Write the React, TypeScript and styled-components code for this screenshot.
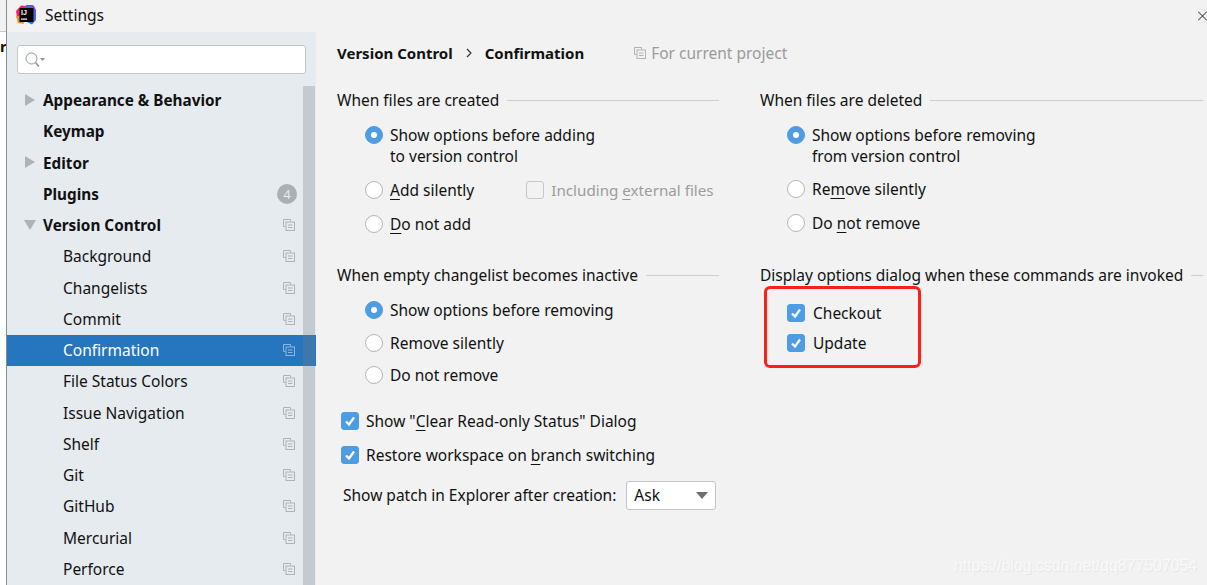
import React from 'react';
import styled, { createGlobalStyle } from 'styled-components';

const FONT = '"Noto Sans", "Open Sans", sans-serif';

const GlobalStyle = createGlobalStyle`
  html, body { margin: 0; padding: 0; background: #f2f2f2; }
  * { box-sizing: border-box; }
`;

const Page = styled.div`
  display: flex;
  position: relative;
  width: 1207px;
  height: 585px;
  overflow: hidden;
  font-family: ${FONT};
  font-size: 15.5px;
  color: #111;
  background: #f2f2f2;
`;

const BehindWindow = styled.div`
  flex: 0 0 7px;
  height: 100%;
  background: #fff;
  border-right: 1px solid #8a8a8a;
  overflow: hidden;
`;

const BehindRule = styled.div`
  height: 32px;
  background: #f2f2f2;
  border-bottom: 1px solid #c8c8c8;
`;

const BehindLetter = styled.div`
  margin: 4px 0 0 0;
  font-weight: 700;
  font-size: 15px;
  line-height: 20px;
  width: 6px;
  overflow: hidden;
`;

const Window = styled.div`
  flex: 1;
  display: flex;
  flex-direction: column;
  min-width: 0;
`;

const TitleBar = styled.div`
  flex: 0 0 32px;
  display: flex;
  align-items: center;
  padding: 0 0 3px 9px;
  gap: 9px;
  position: relative;
`;

const CloseButton = styled.svg`
  position: absolute;
  right: 0;
  top: 10px;
  width: 9px;
  height: 12px;
`;

const Body = styled.div`
  flex: 1;
  display: flex;
  min-height: 0;
`;

const Sidebar = styled.div`
  flex: 0 0 309px;
  position: relative;
  background: #e6ebf0;
  padding-top: 13px;
  overflow: hidden;
`;

const SearchBox = styled.div`
  display: flex;
  align-items: center;
  width: 289px;
  height: 29px;
  margin: 0 0 10.5px 10px;
  padding-left: 7px;
  background: #fff;
  border: 1px solid #c4c7ca;
  border-radius: 3px;
`;

const Scrollbar = styled.div`
  position: absolute;
  top: 54px;
  bottom: 0;
  right: 1px;
  width: 12px;
  background: rgba(120, 125, 130, 0.3);
`;

const TreeRow = styled.div<{ $selected?: boolean; $level?: number; $bold?: boolean }>`
  display: flex;
  align-items: center;
  height: 31.25px;
  padding-left: ${p => (p.$level ? 56 : 36)}px;
  padding-right: 21px;
  position: relative;
  font-size: ${p => (p.$bold ? 15.3 : 15.5)}px;
  font-weight: ${p => (p.$bold ? 700 : 400)};
  color: ${p => (p.$selected ? '#fff' : '#111')};
  background: ${p => (p.$selected ? '#2675bf' : 'transparent')};
`;

const TreeLabel = styled.span`
  flex: 1;
`;

const Arrow = styled.svg`
  position: absolute;
  left: 17px;
  top: 9px;
  width: 12px;
  height: 12px;
  fill: #b0b3b6;
`;

const Badge = styled.span`
  display: flex;
  align-items: center;
  justify-content: center;
  width: 20px;
  height: 20px;
  margin-right: -2px;
  border-radius: 50%;
  background: #a9b0b6;
  color: #e6ebf0;
  font-size: 13px;
  font-weight: 400;
`;

const ProjectIcon = styled.svg<{ $tone?: string }>`
  flex: none;
  width: 12px;
  height: 12px;
  fill: none;
  stroke: ${p => p.$tone || '#afb3b7'};
`;

const Content = styled.div`
  flex: 1;
  min-width: 0;
  padding: 10px 4px 0 21px;
`;

const Breadcrumb = styled.div`
  display: flex;
  align-items: center;
  height: 22px;
  font-size: 15px;
  font-weight: 700;
  margin-bottom: 25px;
`;

const Chevron = styled.svg`
  width: 8px;
  height: 10px;
  margin: 0 12px;
  fill: none;
  stroke: #333;
  stroke-width: 1.2;
`;

const ProjectNote = styled.span`
  display: flex;
  align-items: center;
  gap: 5px;
  margin-left: 50px;
  font-size: 15.5px;
  font-weight: 400;
  color: #9b9b9b;
`;

const Columns = styled.div`
  display: grid;
  grid-template-columns: 382px 443px;
  column-gap: 41px;
`;

const Column = styled.div`
  display: flex;
  flex-direction: column;
`;

const GroupTitle = styled.div<{ $top?: number }>`
  display: flex;
  align-items: center;
  gap: 8px;
  height: 22px;
  margin-top: ${p => p.$top || 0}px;
  white-space: nowrap;
  &::after {
    content: '';
    flex: 1;
    height: 1px;
    background: #cfcfcf;
  }
`;

const OptionRow = styled.div<{ $top: number; $indent?: number }>`
  display: flex;
  align-items: center;
  gap: 7px;
  height: 22px;
  white-space: nowrap;
  margin-top: ${p => p.$top}px;
  margin-left: ${p => p.$indent ?? 28}px;
`;

const OptionText = styled.div<{ $indent: number }>`
  margin-left: ${p => p.$indent}px;
  height: 21px;
  line-height: 21px;
`;

const Radio = styled.span<{ $on?: boolean }>`
  flex: none;
  position: relative;
  width: 18px;
  height: 18px;
  border-radius: 50%;
  background: ${p => (p.$on ? '#4e9de4' : '#fff')};
  border: 1px solid ${p => (p.$on ? '#4e9de4' : '#b5b5b5')};
  &::after {
    content: '';
    display: ${p => (p.$on ? 'block' : 'none')};
    position: absolute;
    left: 5px;
    top: 5px;
    width: 6px;
    height: 6px;
    border-radius: 50%;
    background: #fff;
  }
`;

const CheckBox = styled.span<{ $disabled?: boolean }>`
  flex: none;
  display: flex;
  align-items: center;
  justify-content: center;
  width: 18px;
  height: 18px;
  border-radius: 3px;
  background: ${p => (p.$disabled ? '#f2f2f2' : '#4e9de4')};
  border: 1px solid ${p => (p.$disabled ? '#c8c8c8' : '#4e9de4')};
`;

const Tick = styled.svg`
  width: 12px;
  height: 12px;
  fill: none;
  stroke: #fff;
  stroke-width: 2.2;
`;

const Disabled = styled.span`
  display: flex;
  align-items: center;
  gap: 7px;
  margin-left: 45px;
  font-size: 15.2px;
  color: #9c9c9c;
`;

const Key = styled.u`
  text-underline-offset: 3px;
  text-decoration-thickness: 1px;
`;

const ComboRow = styled.div`
  display: flex;
  align-items: center;
  height: 30px;
  margin: 14px 0 0 6px;
  gap: 10px;
`;

const Combo = styled.div`
  display: flex;
  align-items: center;
  justify-content: space-between;
  width: 90px;
  height: 29px;
  padding: 0 7px;
  background: #fff;
  border: 1px solid #c4c4c4;
  border-radius: 3px;
  &::after {
    content: '';
    border-left: 6px solid transparent;
    border-right: 6px solid transparent;
    border-top: 7px solid #6e6e6e;
  }
`;

const Highlight = styled.div`
  width: 157px;
  height: 82px;
  margin: 0 0 0 4px;
  padding: 13px 0 0 20px;
  border: 3px solid #fb1f17;
  border-radius: 6px;
  display: flex;
  flex-direction: column;
  gap: 8px;
`;

const HighlightRow = styled.div`
  display: flex;
  align-items: center;
  gap: 8px;
  height: 22px;
`;

const Watermark = styled.div`
  position: absolute;
  left: 954px;
  top: 556px;
  font-family: "Liberation Sans", Arial, sans-serif;
  font-size: 15.85px;
  line-height: 20px;
  color: #f9f9f9;
  text-shadow: 1px 1px 1px #e4e4e4;
`;

const Logo = () => (
  <svg width="20" height="20" viewBox="0 0 20 20" style={{ flex: 'none' }}>
    <path d="M0 6 L5 0.5 L11 1 L8 14 L1 13 Z" fill="#ef2a63" />
    <path d="M10 0 L17 0 L20 5 L20 15 L16 19.5 L9 16 Z" fill="#3a6ee8" />
    <path d="M13 0 L18 1 L20 6 L15 7 Z" fill="#8248e0" />
    <path d="M0 11 L6 11 L8 19 L2 18 Z" fill="#f78b2e" />
    <rect x="3.5" y="3" width="14" height="14" fill="#000" />
    <text x="5" y="10" fontFamily='"Liberation Sans", sans-serif' fontSize="7" fontWeight="700" fill="#fff">
      IJ
    </text>
    <rect x="5" y="13.5" width="6" height="1.2" fill="#fff" />
  </svg>
);

const SearchIcon = () => (
  <svg width="20" height="16" viewBox="0 0 20 16" fill="none">
    <circle cx="6.5" cy="6.5" r="5.5" stroke="#8f9396" strokeWidth="1" />
    <path d="M10.5 10.5 L14 14.5" stroke="#8f9396" strokeWidth="1.6" />
    <path d="M15 6 H20 L17.5 9 Z" fill="#8f9396" />
  </svg>
);

const CopyIcon = ({ tone }: { tone?: string }) => (
  <ProjectIcon $tone={tone} viewBox="0 0 12 12">
    <path d="M7.5 2.5 V0.5 H0.5 V7.5 H2.5" />
    <rect x="3" y="3" width="8.5" height="8.5" />
    <path d="M5 6 H9.5 M5 8.5 H9.5" />
  </ProjectIcon>
);

const Check = () => (
  <CheckBox>
    <Tick viewBox="0 0 12 12">
      <path d="M2 6.5 L5 9.5 L10 2.5" />
    </Tick>
  </CheckBox>
);

const tree = [
  { label: 'Appearance & Behavior', bold: true, arrow: 'right' },
  { label: 'Keymap', bold: true },
  { label: 'Editor', bold: true, arrow: 'right' },
  { label: 'Plugins', bold: true, badge: '4' },
  { label: 'Version Control', bold: true, arrow: 'down', icon: true },
  { label: 'Background', level: 1, icon: true },
  { label: 'Changelists', level: 1, icon: true },
  { label: 'Commit', level: 1, icon: true },
  { label: 'Confirmation', level: 1, icon: true, selected: true },
  { label: 'File Status Colors', level: 1, icon: true },
  { label: 'Issue Navigation', level: 1, icon: true },
  { label: 'Shelf', level: 1, icon: true },
  { label: 'Git', level: 1, icon: true },
  { label: 'GitHub', level: 1, icon: true },
  { label: 'Mercurial', level: 1, icon: true },
  { label: 'Perforce', level: 1, icon: true },
];

const App: React.FC = () => {
  return (
    <Page>
      <GlobalStyle />
      <BehindWindow>
        <BehindRule />
        <BehindLetter>r</BehindLetter>
      </BehindWindow>
      <Window>
        <TitleBar>
          <Logo />
          Settings
          <CloseButton viewBox="0 0 9 12">
            <path d="M0 1.5 L9 10.5 M9 1.5 L0 10.5" stroke="#222" strokeWidth="1" />
          </CloseButton>
        </TitleBar>
        <Body>
          <Sidebar>
            <SearchBox>
              <SearchIcon />
            </SearchBox>
            {tree.map(item => (
              <TreeRow key={item.label} $bold={item.bold} $level={item.level} $selected={item.selected}>
                {item.arrow && (
                  <Arrow viewBox="0 0 12 12">
                    {item.arrow === 'right' ? <path d="M1 0 L11 6 L1 12 Z" /> : <path d="M0 1 H12 L6 11 Z" />}
                  </Arrow>
                )}
                <TreeLabel>{item.label}</TreeLabel>
                {item.badge && <Badge>{item.badge}</Badge>}
                {item.icon && <CopyIcon tone={item.selected ? '#8fb6dc' : undefined} />}
              </TreeRow>
            ))}
            <Scrollbar />
          </Sidebar>
          <Content>
            <Breadcrumb>
              Version Control
              <Chevron viewBox="0 0 8 10">
                <path d="M2 1 L6 5 L2 9" />
              </Chevron>
              Confirmation
              <ProjectNote>
                <CopyIcon />
                For current project
              </ProjectNote>
            </Breadcrumb>
            <Columns>
              <Column>
                <GroupTitle>When files are created</GroupTitle>
                <OptionRow $top={13}>
                  <Radio $on />
                  Show options before adding
                </OptionRow>
                <OptionText $indent={53}>to version control</OptionText>
                <OptionRow $top={12}>
                  <Radio />
                  <span>
                    <Key>A</Key>dd silently
                  </span>
                  <Disabled>
                    <CheckBox $disabled />
                    <span>
                      Including <Key>e</Key>xternal files
                    </span>
                  </Disabled>
                </OptionRow>
                <OptionRow $top={12}>
                  <Radio />
                  <span>
                    <Key>D</Key>o not add
                  </span>
                </OptionRow>
                <GroupTitle $top={29}>When empty changelist becomes inactive</GroupTitle>
                <OptionRow $top={13}>
                  <Radio $on />
                  Show options before removing
                </OptionRow>
                <OptionRow $top={11}>
                  <Radio />
                  Remove silently
                </OptionRow>
                <OptionRow $top={10}>
                  <Radio />
                  Do not remove
                </OptionRow>
                <OptionRow $top={24} $indent={4}>
                  <Check />
                  <span>
                    Show "<Key>C</Key>lear Read-only Status" Dialog
                  </span>
                </OptionRow>
                <OptionRow $top={12} $indent={4}>
                  <Check />
                  <span>
                    Restore workspace on <Key>b</Key>ranch switching
                  </span>
                </OptionRow>
                <ComboRow>
                  Show patch in Explorer after creation:
                  <Combo>Ask</Combo>
                </ComboRow>
              </Column>
              <Column>
                <GroupTitle>When files are deleted</GroupTitle>
                <OptionRow $top={13} $indent={27}>
                  <Radio $on />
                  Show options before removing
                </OptionRow>
                <OptionText $indent={52}>from version control</OptionText>
                <OptionRow $top={11} $indent={27}>
                  <Radio />
                  <span>
                    Re<Key>m</Key>ove silently
                  </span>
                </OptionRow>
                <OptionRow $top={12} $indent={27}>
                  <Radio />
                  <span>
                    Do <Key>n</Key>ot remove
                  </span>
                </OptionRow>
                <GroupTitle $top={30}>Display options dialog when these commands are invoked</GroupTitle>
                <Highlight>
                  <HighlightRow>
                    <Check />
                    Checkout
                  </HighlightRow>
                  <HighlightRow>
                    <Check />
                    Update
                  </HighlightRow>
                </Highlight>
              </Column>
            </Columns>
          </Content>
        </Body>
      </Window>
      <Watermark>https://blog.csdn.net/qq877507054</Watermark>
    </Page>
  );
};

export default App;
